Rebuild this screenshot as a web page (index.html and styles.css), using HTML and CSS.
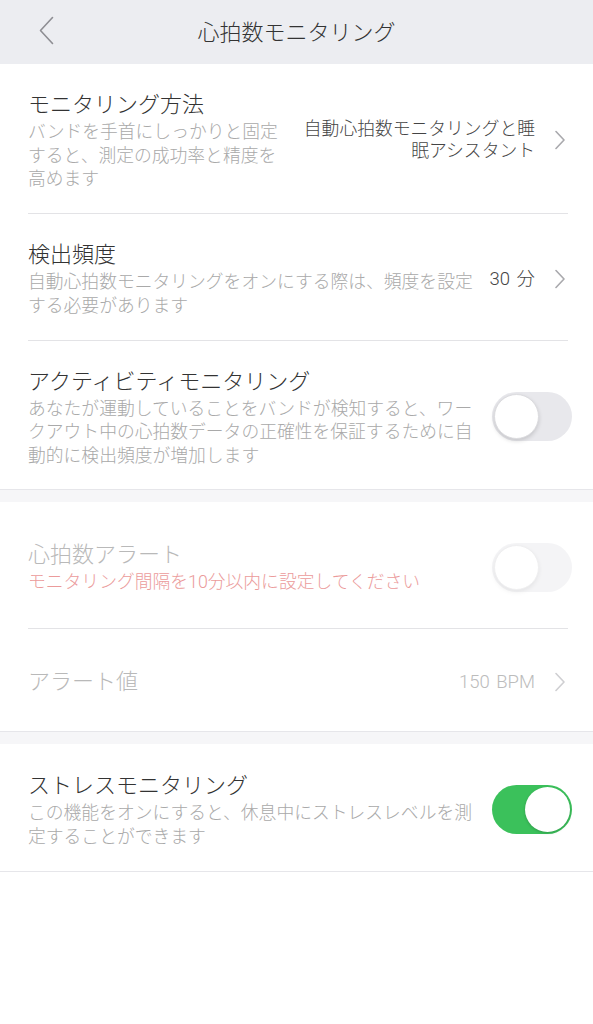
FILE: index.html
```html
<!DOCTYPE html>
<html lang="ja">
<head>
  <meta charset="UTF-8">
  <title>心拍数モニタリング</title>
  <meta name="viewport" content="width=device-width, initial-scale=1.0">
  <link rel="stylesheet" href="styles.css">
</head>
<body>
  <div class="header">
    <div class="back">
      <svg width="15" height="29" viewBox="0 0 15 29"><polyline points="13.5,1.5 1.5,14.5 13.5,27.5" fill="none" stroke="#8e8e93" stroke-width="1.6" stroke-linecap="round" stroke-linejoin="round"/></svg>
    </div>
    <div class="title">心拍数モニタリング</div>
    <div></div>
  </div>

  <div class="section">
    <div class="row">
      <div class="row-text">
        <div class="row-title">モニタリング方法</div>
        <div class="row-desc">バンドを手首にしっかりと固定すると、測定の成功率と精度を高めます</div>
      </div>
      <div class="row-value wide">自動心拍数モニタリングと睡眠アシスタント</div>
      <svg class="chevron" width="10" height="20" viewBox="0 0 10 20"><polyline points="1,1.5 9,10 1,18.5" fill="none" stroke="#a9a9ad" stroke-width="1.6" stroke-linecap="round" stroke-linejoin="round"/></svg>
    </div>
    <div class="row">
      <div class="row-text">
        <div class="row-title">検出頻度</div>
        <div class="row-desc">自動心拍数モニタリングをオンにする際は、頻度を設定する必要があります</div>
      </div>
      <div class="row-value num">30 分</div>
      <svg class="chevron" width="10" height="20" viewBox="0 0 10 20"><polyline points="1,1.5 9,10 1,18.5" fill="none" stroke="#a9a9ad" stroke-width="1.6" stroke-linecap="round" stroke-linejoin="round"/></svg>
    </div>
    <div class="row">
      <div class="row-text">
        <div class="row-title">アクティビティモニタリング</div>
        <div class="row-desc">あなたが運動していることをバンドが検知すると、ワークアウト中の心拍数データの正確性を保証するために自動的に検出頻度が増加します</div>
      </div>
      <div class="toggle"><div class="knob"></div></div>
    </div>
  </div>

  <div class="gap"></div>

  <div class="section">
    <div class="row">
      <div class="row-text">
        <div class="row-title disabled">心拍数アラート</div>
        <div class="row-desc warn">モニタリング間隔を10分以内に設定してください</div>
      </div>
      <div class="toggle off-disabled"><div class="knob"></div></div>
    </div>
    <div class="row short">
      <div class="row-text">
        <div class="row-title disabled">アラート値</div>
      </div>
      <div class="row-value num disabled">150 BPM</div>
      <svg class="chevron" width="10" height="20" viewBox="0 0 10 20"><polyline points="1,1.5 9,10 1,18.5" fill="none" stroke="#cfcfd2" stroke-width="1.6" stroke-linecap="round" stroke-linejoin="round"/></svg>
    </div>
  </div>

  <div class="gap"></div>

  <div class="section">
    <div class="row">
      <div class="row-text">
        <div class="row-title">ストレスモニタリング</div>
        <div class="row-desc">この機能をオンにすると、休息中にストレスレベルを測定することができます</div>
      </div>
      <div class="toggle on"><div class="knob"></div></div>
    </div>
  </div>
</body>
</html>
```

FILE: styles.css
```css
body {
  margin: 0;
  background: #fff;
  font-family: Roboto, "Noto Sans CJK JP", sans-serif;
  font-weight: 300;
  color: #333;
}

.header {
  height: 64px;
  background: #ecedf1;
  display: grid;
  grid-template-columns: 1fr auto 1fr;
  align-items: center;
  padding-bottom: 4px;
  box-sizing: border-box;
}

.back {
  padding-left: 39px;
  display: flex;
  align-items: center;
}

.header .title {
  font-size: 22px;
  color: #333;
}

.section {
  border-bottom: 1px solid #e6e6ea;
}

.gap {
  height: 12px;
  background: #f6f6f8;
}

.row {
  display: flex;
  align-items: center;
  gap: 12px;
  margin: 0 25px 0 28px;
  padding: 26px 0 22px;
  min-height: 127px;
  box-sizing: border-box;
  border-bottom: 1px solid #e3e3e6;
}

.row:last-child {
  border-bottom: none;
}

.row.short {
  min-height: 102px;
}

.row-text {
  flex: 1;
  min-width: 0;
}

.row-title {
  font-size: 22px;
  line-height: 30px;
  color: #333;
}

.row-desc {
  font-size: 17.8px;
  line-height: 23.5px;
  color: #a9a9a9;
}

.row-desc.warn {
  color: #eb9b9b;
}

.disabled {
  color: #b9b9b9;
}

.row-value {
  font-size: 17.8px;
  line-height: 22px;
  color: #444;
  text-align: right;
  margin-right: 8px;
}

.row-value.wide {
  width: 233px;
}

.row-value.num {
  font-size: 18.5px;
  word-spacing: 2px;
}

.row-value.disabled {
  color: #bcbcbc;
}

.chevron {
  flex: none;
  margin-right: 3px;
}

.toggle {
  flex: none;
  width: 80px;
  height: 49px;
  border-radius: 25px;
  background: #e8e8ec;
  margin-right: -4px;
  display: flex;
  align-items: center;
  padding: 0 2px;
  box-sizing: border-box;
}

.knob {
  width: 45px;
  height: 45px;
  border-radius: 50%;
  background: #fff;
  box-sizing: border-box;
  border: 1px solid #dcdcdf;
  box-shadow: 0 2px 4px rgba(0, 0, 0, 0.15);
}

.toggle.off-disabled {
  opacity: 0.45;
}

.toggle.on {
  background: #3bc15b;
  justify-content: flex-end;
}

.toggle.on .knob {
  border: none;
  box-shadow: 0 1px 3px rgba(0, 0, 0, 0.2);
}
```
